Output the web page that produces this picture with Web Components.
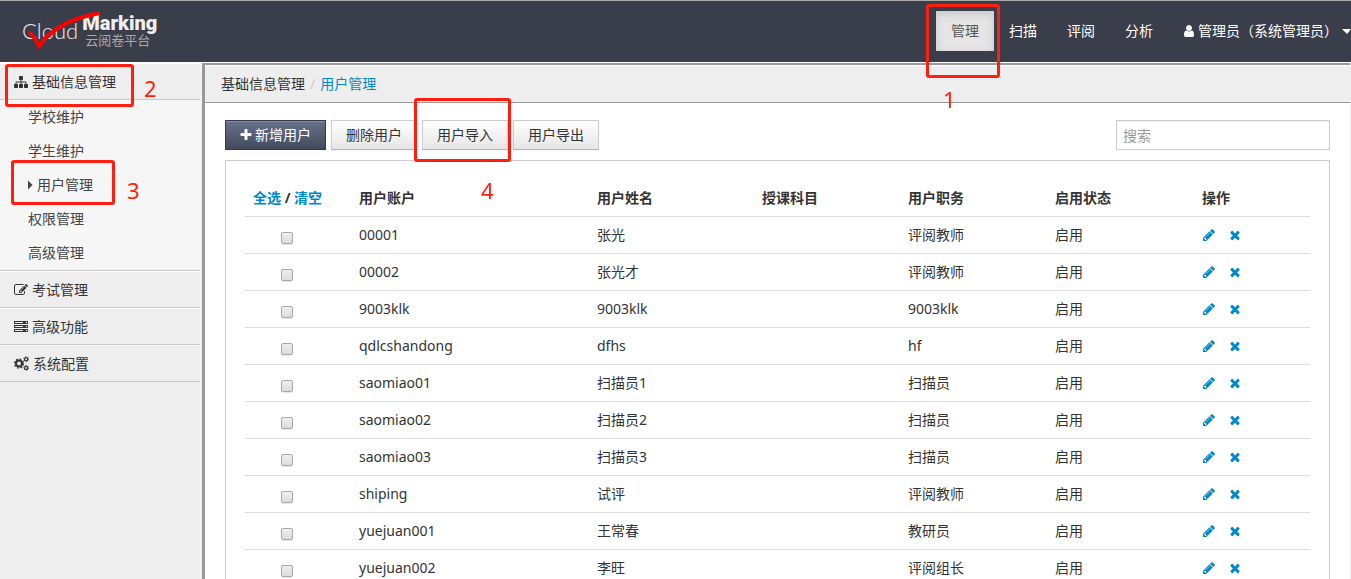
<!DOCTYPE html>
<html lang="zh-CN">
<head>
<meta charset="UTF-8">
<meta name="viewport" content="width=device-width, initial-scale=1.0">
<title>用户管理</title>
<style>
    body {
        margin: 0;
        font: 14px/20px "Noto Sans", "Noto Sans CJK SC", sans-serif;
        color: #333;
        background: #eee;
    }
</style>
</head>
<body>
<marking-app></marking-app>

<script>
const ICONS = {
    pencil: '<path d="M491 1536l91-91-235-235-91 91v107h128v128h107zm523-928q0-22-22-22-10 0-17 7l-542 542q-7 7-7 17 0 22 22 22 10 0 17-7l542-542q7-7 7-17zm-54-192l416 416-832 832h-416v-416zm683 96q0 53-37 90l-166 166-416-416 166-165q36-38 90-38 53 0 91 38l235 234q37 39 37 91z"/>',
    remove: '<path d="M1490 1322q0 40-28 68l-136 136q-28 28-68 28t-68-28l-294-294-294 294q-28 28-68 28t-68-28l-136-136q-28-28-28-68t28-68l294-294-294-294q-28-28-28-68t28-68l136-136q28-28 68-28t68 28l294 294 294-294q28-28 68-28t68 28l136 136q28 28 28 68t-28 68l-294 294 294 294q28 28 28 68z"/>',
    plus: '<path d="M1600 736v192q0 40-28 68t-68 28h-416v416q0 40-28 68t-68 28h-192q-40 0-68-28t-28-68v-416h-416q-40 0-68-28t-28-68v-192q0-40 28-68t68-28h416v-416q0-40 28-68t68-28h192q40 0 68 28t28 68v416h416q40 0 68 28t28 68z"/>',
    sitemap: '<path d="M1792 1248v320q0 40-28 68t-68 28h-320q-40 0-68-28t-28-68v-320q0-40 28-68t68-28h96v-192h-512v192h96q40 0 68 28t28 68v320q0 40-28 68t-68 28h-320q-40 0-68-28t-28-68v-320q0-40 28-68t68-28h96v-192h-512v192h96q40 0 68 28t28 68v320q0 40-28 68t-68 28h-320q-40 0-68-28t-28-68v-320q0-40 28-68t68-28h96v-192q0-52 38-90t90-38h512v-192h-96q-40 0-68-28t-28-68v-320q0-40 28-68t68-28h320q40 0 68 28t28 68v320q0 40-28 68t-68 28h-96v192h512q52 0 90 38t38 90v192h96q40 0 68 28t28 68z"/>',
    edit: '<path d="M888 1184l116-116-152-152-116 116v56h96v96h56zm440-720q-16-16-33 1l-350 350q-17 17-1 33t33-1l350-350q17-17 1-33zm80 594v190q0 119-84.5 203.5t-203.5 84.5h-832q-119 0-203.5-84.5t-84.5-203.5v-832q0-119 84.5-203.5t203.5-84.5h832q63 0 117 25 15 7 18 23 3 17-9 29l-49 49q-14 14-32 8-23-6-45-6h-832q-66 0-113 47t-47 113v832q0 66 47 113t113 47h832q66 0 113-47t47-113v-126q0-13 9-22l64-64q15-15 35-7t20 29zm-96-738l288 288-672 672h-288v-288zm444 132l-92 92-288-288 92-92q28-28 68-28t68 28l152 152q28 28 28 68t-28 68z"/>',
    server: '<path d="M128 1408h1024v-128h-1024v128zm0-512h1024v-128h-1024v128zm1568 448q0-40-28-68t-68-28-68 28-28 68 28 68 68 28 68-28 28-68zm-1568-960h1024v-128h-1024v128zm1568 448q0-40-28-68t-68-28-68 28-28 68 28 68 68 28 68-28 28-68zm0-512q0-40-28-68t-68-28-68 28-28 68 28 68 68 28 68-28 28-68zm96 832v384h-1792v-384h1792zm0-512v384h-1792v-384h1792zm0-512v384h-1792v-384h1792z"/>',
    cogs: '<g fill="none" stroke="currentColor"><circle cx="600" cy="900" r="360" stroke-width="250"/><circle cx="600" cy="900" r="540" stroke-width="150" stroke-dasharray="212 212"/><circle cx="1450" cy="380" r="190" stroke-width="150"/><circle cx="1450" cy="380" r="300" stroke-width="90" stroke-dasharray="157 157"/><circle cx="1450" cy="1420" r="190" stroke-width="150"/><circle cx="1450" cy="1420" r="300" stroke-width="90" stroke-dasharray="157 157"/></g>',
    user: '<path d="M1536 1399q0 109-62.5 187t-150.5 78h-854q-88 0-150.5-78t-62.5-187q0-85 8.5-160.5t31.5-152 58.5-131 94-89 134.5-34.5q131 128 313 128t313-128q76 0 134.5 34.5t94 89 58.5 131 31.5 152 8.5 160.5zm-256-887q0 159-112.5 271.5t-271.5 112.5-271.5-112.5-112.5-271.5 112.5-271.5 271.5-112.5 271.5 112.5 112.5 271.5z"/>',
    caret: '<path d="M640 320l576 576-576 576z"/>'
};

class FaIcon extends HTMLElement {
    connectedCallback() {
        this.attachShadow({ mode: 'open' });
        this.shadowRoot.innerHTML = `
            <style>
                :host { display: inline-block; width: 14px; height: 14px; flex: none; }
                :host([name="cogs"]) { width: 15px; height: 15px; }
                svg { display: block; width: 100%; height: 100%; fill: currentColor; }
            </style>
            <svg viewBox="0 0 1792 1792" aria-hidden="true">${ICONS[this.getAttribute('name')]}</svg>
        `;
    }
}
customElements.define('fa-icon', FaIcon);

class SiteLogo extends HTMLElement {
    connectedCallback() {
        this.attachShadow({ mode: 'open' });
        this.shadowRoot.innerHTML = `
            <style>
                :host { display: block; position: relative; color: #eee; }
                a { display: flex; gap: 4px; color: inherit; text-decoration: none; }
                .cloud { font: 300 22px/40px Lato, sans-serif; }
                .right { display: flex; flex-direction: column; }
                .marking { font: 900 20px/24px Roboto, sans-serif; }
                .sub { font: 13px/12px "Liberation Sans", "Noto Sans CJK SC", sans-serif; color: #aaa; padding-left: 3px; }
                svg { position: absolute; left: 0; top: 0; width: 90px; height: 42px; }
            </style>
            <a href="#">
                <svg viewBox="0 0 90 42" aria-hidden="true">
                    <path d="M7 21c4 3 7 8 10 14C29 18 49 7 78 2" fill="none" stroke="#f00" stroke-width="4"/>
                </svg>
                <span class="cloud">Cloud</span>
                <span class="right">
                    <span class="marking">Marking</span>
                    <span class="sub">云阅卷平台</span>
                </span>
            </a>
        `;
    }
}
customElements.define('site-logo', SiteLogo);

class TopBar extends HTMLElement {
    connectedCallback() {
        this.attachShadow({ mode: 'open' });
        this.shadowRoot.innerHTML = `
            <style>
                :host {
                    display: flex;
                    justify-content: space-between;
                    align-items: flex-start;
                    height: 61px;
                    border-top: 1px solid #aaa;
                    border-bottom: 1px solid #fff;
                    background: #3a3d4a;
                    color: #fff;
                }
                site-logo { margin: 10px 0 0 22px; }
                nav { display: flex; margin-top: 10px; }
                nav a {
                    display: flex;
                    align-items: center;
                    height: 40px;
                    padding: 0 15px;
                    color: #fff;
                    text-decoration: none;
                    white-space: nowrap;
                }
                nav a.active {
                    background: #e5e5e5;
                    color: #555;
                    box-shadow: inset 0 3px 8px rgba(0, 0, 0, 0.125);
                }
                nav a.user { padding: 0 0 0 14px; }
                nav a.user fa-icon { margin-right: 2px; }
                .caret {
                    margin-left: 4px;
                    border: 5px solid transparent;
                    border-top-color: #fff;
                    border-right-width: 4px;
                    border-bottom: 0;
                }
            </style>
            <site-logo></site-logo>
            <nav>
                <a href="#" class="active">管理</a>
                <a href="#">扫描</a>
                <a href="#">评阅</a>
                <a href="#">分析</a>
                <a href="#" class="user"><fa-icon name="user"></fa-icon>管理员（系统管理员）<span class="caret"></span></a>
            </nav>
        `;
    }
}
customElements.define('top-bar', TopBar);

class MenuGroup extends HTMLElement {
    connectedCallback() {
        this.attachShadow({ mode: 'open' });
        this.shadowRoot.innerHTML = `
            <style>
                :host { display: block; }
                .head {
                    display: flex;
                    align-items: center;
                    gap: 4px;
                    height: 35px;
                    padding-left: 14px;
                    border-top: 1px solid #fff;
                    border-bottom: 1px solid #c8c8c8;
                    color: #333;
                    text-decoration: none;
                }
                .sub { display: none; background: #f6f6f6; border-bottom: 1px solid #c8c8c8; }
                :host([open]) .sub { display: block; }
            </style>
            <a href="#" class="head"><fa-icon name="${this.getAttribute('icon')}"></fa-icon>${this.getAttribute('label')}</a>
            <div class="sub"><slot></slot></div>
        `;
    }
}
customElements.define('menu-group', MenuGroup);

class SideMenu extends HTMLElement {
    connectedCallback() {
        this.attachShadow({ mode: 'open' });
        this.shadowRoot.innerHTML = `
            <style>
                :host { display: block; flex: none; width: 200px; border-right: 2px solid #f3f3f3; }
                menu-group a {
                    display: flex;
                    align-items: center;
                    height: 34px;
                    padding-left: 28px;
                    color: #444;
                    text-decoration: none;
                }
                menu-group a fa-icon { margin-left: -5px; }
            </style>
            <menu-group icon="sitemap" label="基础信息管理" open>
                <a href="#">学校维护</a>
                <a href="#">学生维护</a>
                <a href="#"><fa-icon name="caret"></fa-icon>用户管理</a>
                <a href="#">权限管理</a>
                <a href="#">高级管理</a>
            </menu-group>
            <menu-group icon="edit" label="考试管理"></menu-group>
            <menu-group icon="server" label="高级功能"></menu-group>
            <menu-group icon="cogs" label="系统配置"></menu-group>
        `;
    }
}
customElements.define('side-menu', SideMenu);

class BreadCrumb extends HTMLElement {
    connectedCallback() {
        this.attachShadow({ mode: 'open' });
        this.shadowRoot.innerHTML = `
            <style>
                :host {
                    display: flex;
                    align-items: center;
                    gap: 5px;
                    height: 36px;
                    padding: 0 16px;
                    border-top: 1px solid #fff;
                    border-bottom: 1px solid #999;
                    background: #eee;
                }
                a { color: #333; text-decoration: none; }
                a.current { color: #08c; }
                span { color: #ccc; }
            </style>
            <a href="#">基础信息管理</a><span>/</span><a href="#" class="current">用户管理</a>
        `;
    }
}
customElements.define('bread-crumb', BreadCrumb);

class ToolBar extends HTMLElement {
    connectedCallback() {
        this.attachShadow({ mode: 'open' });
        this.shadowRoot.innerHTML = `
            <style>
                :host { display: flex; gap: 5px; }
                button {
                    display: flex;
                    align-items: center;
                    height: 30px;
                    padding: 0 14px;
                    border: 1px solid #ccc;
                    border-bottom-color: #b3b3b3;
                    background: linear-gradient(#fff, #e6e6e6);
                    box-shadow: 0 1px 2px rgba(0, 0, 0, 0.05);
                    color: #333;
                    font: inherit;
                }
                button.primary {
                    padding-left: 13px;
                    gap: 2px;
                    border-color: #343a4c;
                    background: linear-gradient(#68728c, #424a5c);
                    box-shadow: inset 0 1px 0 rgba(255, 255, 255, 0.2);
                    color: #fff;
                }
                input {
                    box-sizing: border-box;
                    width: 214px;
                    height: 30px;
                    margin-left: auto;
                    padding: 4px 6px;
                    border: 1px solid #ccc;
                    box-shadow: inset 0 1px 1px rgba(0, 0, 0, 0.075);
                    font: inherit;
                }
                input::placeholder { color: #999; }
            </style>
            <button type="button" class="primary"><fa-icon name="plus"></fa-icon>新增用户</button>
            <button type="button">删除用户</button>
            <button type="button">用户导入</button>
            <button type="button">用户导出</button>
            <input type="text" placeholder="搜索" aria-label="搜索">
        `;
    }
}
customElements.define('tool-bar', ToolBar);

const USERS = [
    ['00001', '张光', '', '评阅教师'],
    ['00002', '张光才', '', '评阅教师'],
    ['9003klk', '9003klk', '', '9003klk'],
    ['qdlcshandong', 'dfhs', '', 'hf'],
    ['saomiao01', '扫描员1', '', '扫描员'],
    ['saomiao02', '扫描员2', '', '扫描员'],
    ['saomiao03', '扫描员3', '', '扫描员'],
    ['shiping', '试评', '', '评阅教师'],
    ['yuejuan001', '王常春', '', '教研员'],
    ['yuejuan002', '李旺', '', '评阅组长']
];

// Relative column widths; the fixed table layout scales them to the panel
const COLUMNS = [106, 238, 165, 146, 147, 147, 116];

class UserTable extends HTMLElement {
    connectedCallback() {
        const cols = COLUMNS.map(width => `<col style="width: ${width}px">`).join('');
        const rows = USERS.map(user => `
            <tr>
                <td class="check"><input type="checkbox" aria-label="${user[0]}"></td>
                ${user.map(text => `<td>${text}</td>`).join('')}
                <td>启用</td>
                <td><div class="actions">
                    <a href="#" aria-label="编辑"><fa-icon name="pencil"></fa-icon></a>
                    <a href="#" aria-label="删除"><fa-icon name="remove"></fa-icon></a>
                </div></td>
            </tr>`).join('');

        this.attachShadow({ mode: 'open' });
        this.shadowRoot.innerHTML = `
            <style>
                :host { display: block; padding: 19px; border: 1px solid #ccc; background: #fff; }
                table { width: 100%; table-layout: fixed; border-collapse: separate; border-spacing: 0; }
                th, td {
                    height: 20px;
                    padding: 8px;
                    border-bottom: 1px solid #ddd;
                    text-align: left;
                    vertical-align: top;
                    white-space: nowrap;
                }
                th { font-weight: 700; }
                a { color: #08c; text-decoration: none; }
                td.check { padding-right: 30px; text-align: center; }
                input {
                    appearance: none;
                    display: block;
                    width: 12px;
                    height: 12px;
                    margin: 7px auto 0;
                    border: 1px solid #a9a9a9;
                    border-radius: 2px;
                    background: linear-gradient(#eee, #dcdcdc);
                    box-shadow: 0 1px 1px rgba(0, 0, 0, 0.1);
                }
                .actions { display: flex; align-items: center; gap: 12px; height: 20px; }
                .actions a { display: flex; }
            </style>
            <table>
                <colgroup>${cols}</colgroup>
                <thead>
                    <tr>
                        <th><a href="#">全选</a> / <a href="#">清空</a></th>
                        <th>用户账户</th>
                        <th>用户姓名</th>
                        <th>授课科目</th>
                        <th>用户职务</th>
                        <th>启用状态</th>
                        <th>操作</th>
                    </tr>
                </thead>
                <tbody>${rows}</tbody>
            </table>
        `;
    }
}
customElements.define('user-table', UserTable);

// Numbered red frame laid over the page; the host's inline style places it
class StepMark extends HTMLElement {
    connectedCallback() {
        this.attachShadow({ mode: 'open' });
        this.shadowRoot.innerHTML = `
            <style>
                :host {
                    position: absolute;
                    box-sizing: border-box;
                    border: 3px solid #ff1e10;
                    border-radius: 3px;
                    color: #ff1e10;
                    font-size: 22px;
                    line-height: 24px;
                    pointer-events: none;
                }
                span { position: absolute; left: var(--num-left); top: var(--num-top); }
            </style>
            <span><slot></slot></span>
        `;
    }
}
customElements.define('step-mark', StepMark);

class MarkingApp extends HTMLElement {
    connectedCallback() {
        this.attachShadow({ mode: 'open' });
        this.shadowRoot.innerHTML = `
            <style>
                :host {
                    display: flex;
                    flex-direction: column;
                    position: relative;
                    height: 100vh;
                    overflow: hidden;
                }
                top-bar { flex: none; }
                .body { display: flex; flex: 1; min-height: 0; }
                main {
                    flex: 1;
                    min-width: 0;
                    border: solid #999;
                    border-width: 2px 0 0 3px;
                    margin-right: 1px;
                    background: #fff;
                    overflow: auto;
                    scrollbar-width: none;
                }
                .content { display: flex; flex-direction: column; gap: 10px; padding: 17px 20px; }
            </style>
            <top-bar></top-bar>
            <div class="body">
                <side-menu></side-menu>
                <main>
                    <bread-crumb></bread-crumb>
                    <div class="content">
                        <tool-bar></tool-bar>
                        <user-table></user-table>
                    </div>
                </main>
            </div>
            <step-mark style="right: 351px; top: 4px; width: 74px; height: 74px; --num-left: 14px; --num-top: 80px">1</step-mark>
            <step-mark style="left: 5px; top: 64px; width: 129px; height: 43px; --num-left: 136px; --num-top: 9px">2</step-mark>
            <step-mark style="left: 11px; top: 160px; width: 104px; height: 45px; --num-left: 113px; --num-top: 15px">3</step-mark>
            <step-mark style="left: 414px; top: 98px; width: 97px; height: 64px; --num-left: 64px; --num-top: 77px">4</step-mark>
        `;
    }
}
customElements.define('marking-app', MarkingApp);
</script>
</body>
</html>
